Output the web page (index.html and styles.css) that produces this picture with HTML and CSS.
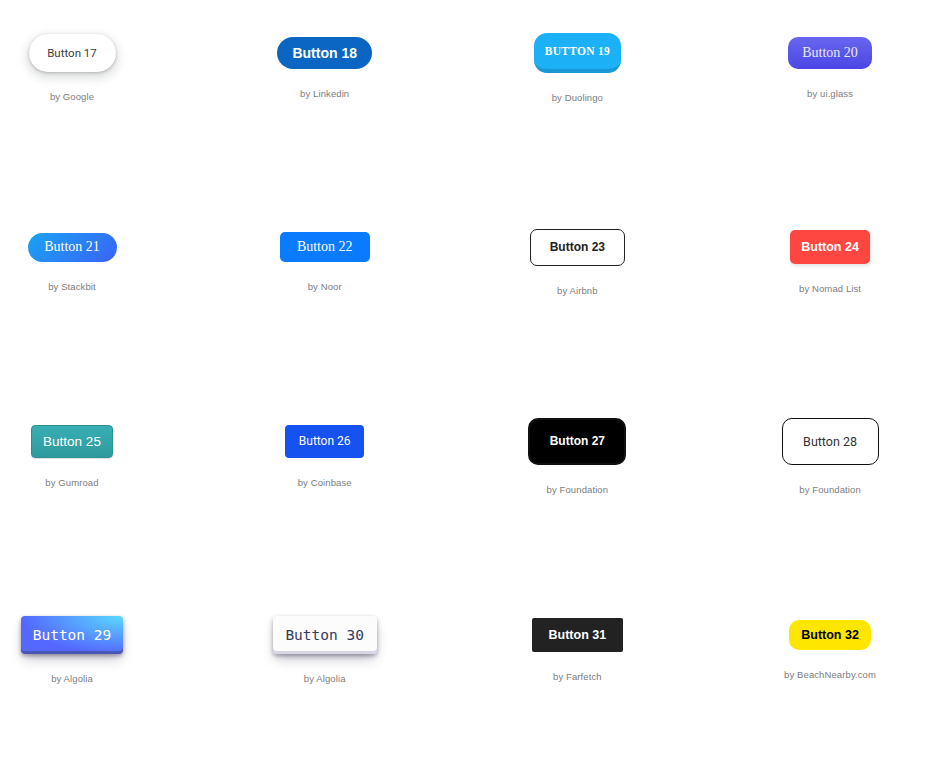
FILE: index.html
```html
<!DOCTYPE html>
<html lang="en">

<head>
    <meta charset="UTF-8">
    <title>Buttons 17 - 32</title>
    <link rel="stylesheet" href="styles.css">
</head>

<body>
    <div class="board">
        <div class="cell">
            <button class="btn btn-google">Button 17</button>
            <span class="credit">by Google</span>
        </div>
        <div class="cell">
            <button class="btn btn-linkedin">Button 18</button>
            <span class="credit">by Linkedin</span>
        </div>
        <div class="cell">
            <button class="btn btn-duolingo">Button 19</button>
            <span class="credit">by Duolingo</span>
        </div>
        <div class="cell">
            <button class="btn btn-glass">Button 20</button>
            <span class="credit">by ui.glass</span>
        </div>

        <div class="cell">
            <button class="btn btn-stackbit">Button 21</button>
            <span class="credit">by Stackbit</span>
        </div>
        <div class="cell">
            <button class="btn btn-noor">Button 22</button>
            <span class="credit">by Noor</span>
        </div>
        <div class="cell">
            <button class="btn btn-airbnb">Button 23</button>
            <span class="credit">by Airbnb</span>
        </div>
        <div class="cell">
            <button class="btn btn-nomad">Button 24</button>
            <span class="credit">by Nomad List</span>
        </div>

        <div class="cell">
            <button class="btn btn-gumroad">Button 25</button>
            <span class="credit">by Gumroad</span>
        </div>
        <div class="cell">
            <button class="btn btn-coinbase">Button 26</button>
            <span class="credit">by Coinbase</span>
        </div>
        <div class="cell">
            <button class="btn btn-foundation">Button 27</button>
            <span class="credit">by Foundation</span>
        </div>
        <div class="cell">
            <button class="btn btn-foundation-outline">Button 28</button>
            <span class="credit">by Foundation</span>
        </div>

        <div class="cell">
            <button class="btn btn-algolia">Button 29</button>
            <span class="credit">by Algolia</span>
        </div>
        <div class="cell">
            <button class="btn btn-algolia-light">Button 30</button>
            <span class="credit">by Algolia</span>
        </div>
        <div class="cell">
            <button class="btn btn-farfetch">Button 31</button>
            <span class="credit">by Farfetch</span>
        </div>
        <div class="cell">
            <button class="btn btn-beach">Button 32</button>
            <span class="credit">by BeachNearby.com</span>
        </div>
    </div>
</body>

</html>
```

FILE: styles.css
```css
body {
    margin: 0;
    padding-top: 1px;
    background: #fff;
    font-family: "Liberation Sans", Arial, sans-serif;
}

.board {
    display: grid;
    grid-template-columns: repeat(4, 144px);
    grid-auto-rows: 104px;
    column-gap: 108.7px;
    row-gap: 90px;
}

/* padding-top balances the credit line so the button sits on the row centre */
.cell {
    display: flex;
    flex-direction: column;
    align-items: center;
    justify-content: center;
    padding-top: 31px;
}

.credit {
    margin-top: 19px;
    font-size: 9.5px;
    line-height: 12px;
    color: #7d7d7d;
    letter-spacing: 0.1px;
    white-space: nowrap;
}

.btn {
    display: inline-flex;
    align-items: center;
    justify-content: center;
    box-sizing: border-box;
    flex-shrink: 0;
    margin: 0;
    padding: 0;
    border: 0;
    white-space: nowrap;
    cursor: pointer;
    font-family: "Liberation Sans", Arial, sans-serif;
}

.btn-google {
    width: 87px;
    height: 38px;
    border-radius: 19px;
    background: #fff;
    color: #3c4043;
    font-family: Roboto, sans-serif;
    font-size: 11.5px;
    box-shadow: rgba(60, 64, 67, 0.3) 0 1px 3px 0, rgba(60, 64, 67, 0.15) 0 4px 8px 3px;
}

.btn-linkedin {
    width: 95px;
    height: 32px;
    border-radius: 16px;
    background: #0a66c2;
    color: #fff;
    font-size: 14px;
    font-weight: bold;
}

.btn-duolingo {
    width: 87px;
    height: 40px;
    border-radius: 13px;
    background: #1cb0f6;
    border-bottom: 4px solid #1899d6;
    color: #fff;
    font-family: "Liberation Serif", serif;
    font-size: 11.5px;
    font-weight: bold;
    text-transform: uppercase;
    letter-spacing: 0.3px;
}

.btn-glass {
    width: 84px;
    height: 32px;
    border-radius: 10px;
    background: linear-gradient(#6866f0, #4b46e4);
    color: #eceaff;
    font-family: "Liberation Serif", serif;
    font-size: 14px;
}

.btn-stackbit {
    width: 89px;
    height: 29px;
    border-radius: 15px;
    background: linear-gradient(135deg, #19a3f3, #3a63f7);
    color: #fff;
    font-family: "Liberation Serif", serif;
    font-size: 14px;
}

.btn-noor {
    width: 90px;
    height: 30px;
    border-radius: 5px;
    background: #0a7bff;
    color: #fff;
    font-family: "Liberation Serif", serif;
    font-size: 14px;
}

.btn-airbnb {
    width: 95px;
    height: 37px;
    border: 1px solid #222;
    border-radius: 7px;
    background: #fff;
    color: #222;
    font-size: 12px;
    font-weight: bold;
}

.btn-nomad {
    width: 80px;
    height: 34px;
    border-radius: 5px;
    background: #ff4742;
    color: #fff;
    font-size: 12.5px;
    font-weight: bold;
    box-shadow: rgba(0, 0, 0, 0.12) 1px 2px 4px;
}

.btn-gumroad {
    width: 82px;
    height: 33px;
    border: 1px solid #2a8f93;
    border-radius: 4px;
    background: linear-gradient(#38aeb3, #2f9a9e);
    color: #fff;
    font-size: 13.5px;
    box-shadow: rgba(0, 0, 0, 0.12) 0 1px 1px;
}

.btn-coinbase {
    width: 79px;
    height: 33px;
    border-radius: 4px;
    background: #1652f0;
    color: #fff;
    font-family: Roboto, sans-serif;
    font-size: 12px;
}

.btn-foundation {
    width: 98px;
    height: 47px;
    border: 2px solid #111;
    border-radius: 10px;
    background: #000;
    color: #fff;
    font-size: 12px;
    font-weight: bold;
}

.btn-foundation-outline {
    width: 97px;
    height: 47px;
    border: 1.5px solid #111;
    border-radius: 10px;
    background: #fff;
    color: #333;
    font-family: Roboto, sans-serif;
    font-size: 12.5px;
}

.btn-algolia {
    width: 102px;
    height: 38px;
    border-radius: 4px;
    background-image: radial-gradient(100% 100% at 100% 0, #5adaff 0, #5468ff 100%);
    color: #fff;
    font-family: "DejaVu Sans Mono", monospace;
    font-size: 14.5px;
    box-shadow: rgba(45, 35, 66, 0.4) 0 2px 4px, rgba(45, 35, 66, 0.3) 0 7px 13px -3px, rgba(58, 65, 111, 0.5) 0 -3px 0 inset;
}

.btn-algolia-light {
    width: 104px;
    height: 38px;
    border-radius: 4px;
    background: #fcfcfd;
    color: #36395a;
    font-family: "DejaVu Sans Mono", monospace;
    font-size: 14.5px;
    box-shadow: rgba(45, 35, 66, 0.4) 0 2px 4px, rgba(45, 35, 66, 0.3) 0 7px 13px -3px, #d6d6e7 0 -3px 0 inset;
}

.btn-farfetch {
    width: 91px;
    height: 34px;
    border-radius: 2px;
    background: #222;
    color: #fff;
    font-size: 12.5px;
    font-weight: bold;
}

.btn-beach {
    width: 82px;
    height: 30px;
    border-radius: 10px;
    background: #fee600;
    color: #000;
    font-size: 12.5px;
    font-weight: bold;
}
```
